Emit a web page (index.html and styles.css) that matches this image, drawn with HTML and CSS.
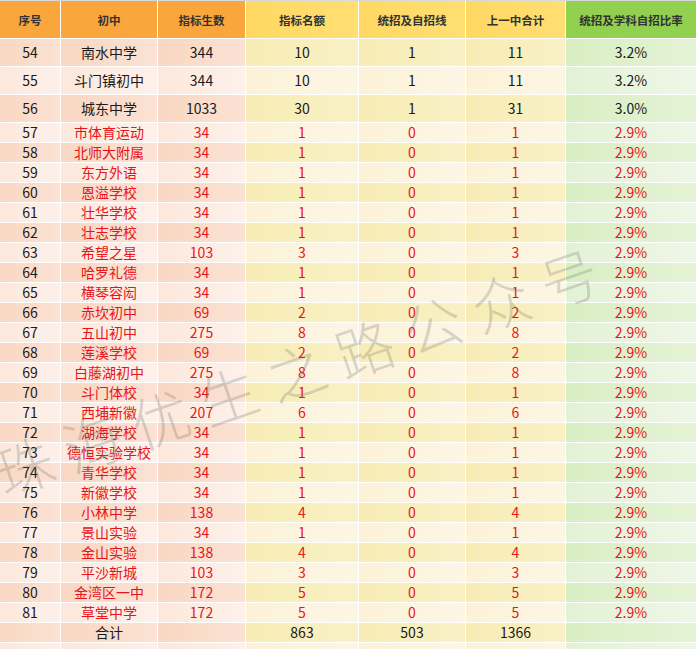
FILE: index.html
```html
<!DOCTYPE html>
<html lang="zh-CN">
<head>
<meta charset="utf-8">
<title>指标生名额表</title>
<link rel="stylesheet" href="styles.css">
</head>
<body>
<div class="page">
  <div class="sheet">
    <div class="hc o">序号</div><div class="hc o">初中</div><div class="hc o">指标生数</div><div class="hc y">指标名额</div><div class="hc y">统招及自招线</div><div class="hc y">上一中合计</div><div class="hc g">统招及学科自招比率</div>

    <div class="c o d tall">54</div><div class="c o d tall">南水中学</div><div class="c o d tall">344</div><div class="c y d tall">10</div><div class="c y d tall">1</div><div class="c y d tall">11</div><div class="c g d tall">3.2%</div>
    <div class="c o l tall">55</div><div class="c o l tall">斗门镇初中</div><div class="c o l tall">344</div><div class="c y l tall">10</div><div class="c y l tall">1</div><div class="c y l tall">11</div><div class="c g l tall">3.2%</div>
    <div class="c o d tall">56</div><div class="c o d tall">城东中学</div><div class="c o d tall">1033</div><div class="c y d tall">30</div><div class="c y d tall">1</div><div class="c y d tall">31</div><div class="c g d tall">3.0%</div>

    <div class="c o l">57</div><div class="c o l r">市体育运动</div><div class="c o l r">34</div><div class="c y l r">1</div><div class="c y l r">0</div><div class="c y l r">1</div><div class="c g l r">2.9%</div>
    <div class="c o d">58</div><div class="c o d r">北师大附属</div><div class="c o d r">34</div><div class="c y d r">1</div><div class="c y d r">0</div><div class="c y d r">1</div><div class="c g d r">2.9%</div>
    <div class="c o l">59</div><div class="c o l r">东方外语</div><div class="c o l r">34</div><div class="c y l r">1</div><div class="c y l r">0</div><div class="c y l r">1</div><div class="c g l r">2.9%</div>
    <div class="c o d">60</div><div class="c o d r">恩溢学校</div><div class="c o d r">34</div><div class="c y d r">1</div><div class="c y d r">0</div><div class="c y d r">1</div><div class="c g d r">2.9%</div>
    <div class="c o l">61</div><div class="c o l r">壮华学校</div><div class="c o l r">34</div><div class="c y l r">1</div><div class="c y l r">0</div><div class="c y l r">1</div><div class="c g l r">2.9%</div>
    <div class="c o d">62</div><div class="c o d r">壮志学校</div><div class="c o d r">34</div><div class="c y d r">1</div><div class="c y d r">0</div><div class="c y d r">1</div><div class="c g d r">2.9%</div>
    <div class="c o l">63</div><div class="c o l r">希望之星</div><div class="c o l r">103</div><div class="c y l r">3</div><div class="c y l r">0</div><div class="c y l r">3</div><div class="c g l r">2.9%</div>
    <div class="c o d">64</div><div class="c o d r">哈罗礼德</div><div class="c o d r">34</div><div class="c y d r">1</div><div class="c y d r">0</div><div class="c y d r">1</div><div class="c g d r">2.9%</div>
    <div class="c o l">65</div><div class="c o l r">横琴容闳</div><div class="c o l r">34</div><div class="c y l r">1</div><div class="c y l r">0</div><div class="c y l r">1</div><div class="c g l r">2.9%</div>
    <div class="c o d">66</div><div class="c o d r">赤坎初中</div><div class="c o d r">69</div><div class="c y d r">2</div><div class="c y d r">0</div><div class="c y d r">2</div><div class="c g d r">2.9%</div>
    <div class="c o l">67</div><div class="c o l r">五山初中</div><div class="c o l r">275</div><div class="c y l r">8</div><div class="c y l r">0</div><div class="c y l r">8</div><div class="c g l r">2.9%</div>
    <div class="c o d">68</div><div class="c o d r">莲溪学校</div><div class="c o d r">69</div><div class="c y d r">2</div><div class="c y d r">0</div><div class="c y d r">2</div><div class="c g d r">2.9%</div>
    <div class="c o l">69</div><div class="c o l r">白藤湖初中</div><div class="c o l r">275</div><div class="c y l r">8</div><div class="c y l r">0</div><div class="c y l r">8</div><div class="c g l r">2.9%</div>
    <div class="c o d">70</div><div class="c o d r">斗门体校</div><div class="c o d r">34</div><div class="c y d r">1</div><div class="c y d r">0</div><div class="c y d r">1</div><div class="c g d r">2.9%</div>
    <div class="c o l">71</div><div class="c o l r">西埔新徽</div><div class="c o l r">207</div><div class="c y l r">6</div><div class="c y l r">0</div><div class="c y l r">6</div><div class="c g l r">2.9%</div>
    <div class="c o d">72</div><div class="c o d r">湖海学校</div><div class="c o d r">34</div><div class="c y d r">1</div><div class="c y d r">0</div><div class="c y d r">1</div><div class="c g d r">2.9%</div>
    <div class="c o l">73</div><div class="c o l r">德恒实验学校</div><div class="c o l r">34</div><div class="c y l r">1</div><div class="c y l r">0</div><div class="c y l r">1</div><div class="c g l r">2.9%</div>
    <div class="c o d">74</div><div class="c o d r">青华学校</div><div class="c o d r">34</div><div class="c y d r">1</div><div class="c y d r">0</div><div class="c y d r">1</div><div class="c g d r">2.9%</div>
    <div class="c o l">75</div><div class="c o l r">新徽学校</div><div class="c o l r">34</div><div class="c y l r">1</div><div class="c y l r">0</div><div class="c y l r">1</div><div class="c g l r">2.9%</div>
    <div class="c o d">76</div><div class="c o d r">小林中学</div><div class="c o d r">138</div><div class="c y d r">4</div><div class="c y d r">0</div><div class="c y d r">4</div><div class="c g d r">2.9%</div>
    <div class="c o l">77</div><div class="c o l r">景山实验</div><div class="c o l r">34</div><div class="c y l r">1</div><div class="c y l r">0</div><div class="c y l r">1</div><div class="c g l r">2.9%</div>
    <div class="c o d">78</div><div class="c o d r">金山实验</div><div class="c o d r">138</div><div class="c y d r">4</div><div class="c y d r">0</div><div class="c y d r">4</div><div class="c g d r">2.9%</div>
    <div class="c o l">79</div><div class="c o l r">平沙新城</div><div class="c o l r">103</div><div class="c y l r">3</div><div class="c y l r">0</div><div class="c y l r">3</div><div class="c g l r">2.9%</div>
    <div class="c o d">80</div><div class="c o d r">金湾区一中</div><div class="c o d r">172</div><div class="c y d r">5</div><div class="c y d r">0</div><div class="c y d r">5</div><div class="c g d r">2.9%</div>
    <div class="c o l">81</div><div class="c o l r">草堂中学</div><div class="c o l r">172</div><div class="c y l r">5</div><div class="c y l r">0</div><div class="c y l r">5</div><div class="c g l r">2.9%</div>

    <div class="c o d"></div><div class="c o d">合计</div><div class="c o d"></div><div class="c y d">863</div><div class="c y d">503</div><div class="c y d">1366</div><div class="c g d"></div>
    <div class="c o l"></div><div class="c o l"></div><div class="c o l"></div><div class="c y l"></div><div class="c y l"></div><div class="c y l"></div><div class="c g l"></div>
  </div>
  <div class="watermark">珠海优生之路公众号</div>
</div>
</body>
</html>
```

FILE: styles.css
```css
html, body {
  margin: 0;
  padding: 0;
  background: #ffffff;
}

.page {
  position: relative;
  width: 696px;
  height: 649px;
  overflow: hidden;
  border-top: 1px solid #d9d9d9;
  box-sizing: border-box;
  font-family: "Noto Sans CJK SC", "Noto Sans", sans-serif;
}

.sheet {
  display: grid;
  grid-template-columns: 60px 96px 87px 112px 106px 99px 130px;
  grid-auto-rows: 19px;
  grid-template-rows: 37px 27px 27px 27px;
  gap: 1px;
  background: #ffffff;
}

.hc {
  display: flex;
  align-items: center;
  justify-content: center;
  font-size: 11.5px;
  font-weight: bold;
  color: #333333;
  white-space: nowrap;
}

.hc.o { background: #f9a63d; }
.hc.y { background: linear-gradient(90deg, #ffd863, #ffdf72); }
.hc.g { background: #92d050; }

.c {
  display: flex;
  align-items: center;
  justify-content: center;
  font-size: 14px;
  line-height: 19px;
  color: #1a1a1a;
  white-space: nowrap;
}

.c.r { color: #e8141c; }

.c.o.d { background: linear-gradient(90deg, #f9d7c2, #fbe2d4); }
.c.o.l { background: linear-gradient(90deg, #fce8dc, #fdf1ea); }
.c.y.d { background: linear-gradient(90deg, #f7ecb4, #f9f1c6); }
.c.y.l { background: linear-gradient(90deg, #fcf2d8, #fdf6e5); }
.c.g.d { background: linear-gradient(90deg, #d9eec3, #e4f3d6); }
.c.g.l { background: linear-gradient(90deg, #e3f2d6, #eef7e7); }

.watermark {
  position: absolute;
  left: -34px;
  top: 336px;
  width: 620px;
  padding-left: 14px;
  box-sizing: border-box;
  text-align: center;
  font-size: 58px;
  line-height: 80px;
  letter-spacing: 14px;
  font-weight: 300;
  color: rgba(100, 100, 100, 0.24);
  transform: rotate(-19deg);
  transform-origin: 50% 50%;
  pointer-events: none;
  white-space: nowrap;
}
```
